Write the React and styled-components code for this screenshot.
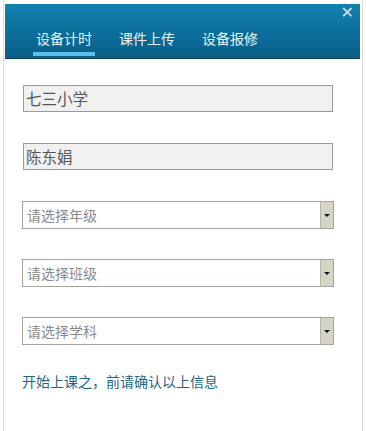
import React from "react";
import styled, { createGlobalStyle } from "styled-components";

const Global = createGlobalStyle`
  html, body { margin: 0; padding: 0; background: #fff; }
  body { font-family: "Noto Sans CJK SC", "Noto Sans", sans-serif; }
`;

const Page = styled.div`
  width: 366px;
  height: 431px;
  padding-left: 3px;
  box-sizing: border-box;
  overflow: hidden;
`;

const Panel = styled.div`
  width: 360px;
  height: 431px;
  box-sizing: border-box;
  border-left: 1px solid #dcdcdc;
  border-right: 1px solid #dcdcdc;
  display: flex;
  flex-direction: column;
`;

const Header = styled.div`
  position: relative;
  margin: 4px 2px 0 1px;
  height: 55px;
  box-sizing: border-box;
  background: linear-gradient(to bottom, #1282b1 0%, #0c6e9b 55%, #0a5d86 100%);
  border-bottom: 1px solid #0a3d58;
  display: flex;
  align-items: flex-end;
  padding-left: 28px;
  gap: 21px;
`;

const Tab = styled.div`
  position: relative;
  color: #e8f4fa;
  font-size: 14px;
  line-height: 20px;
  padding: 0 3px 10px;
  ${(p) =>
    p.$active &&
    `
    &::after {
      content: "";
      position: absolute;
      left: 0;
      right: 0;
      bottom: 2px;
      height: 4px;
      background: #5fc0ea;
    }
  `}
`;

const Close = styled.div`
  position: absolute;
  right: 6px;
  top: 1px;
  color: #cfe9f6;
  font-family: "DejaVu Sans", sans-serif;
  font-weight: bold;
  font-size: 16px;
  line-height: 16px;
`;

const Body = styled.div`
  display: flex;
  flex-direction: column;
  padding: 26px 0 0 18px;
`;

const TextBox = styled.div`
  width: 310px;
  height: 27px;
  margin: 0 0 31px 1px;
  box-sizing: border-box;
  background: #f0f0f0;
  border: 1px solid #9a9a9a;
  color: #555;
  font-size: 15.5px;
  line-height: 25px;
  padding-left: 2px;
`;

const Select = styled.div`
  width: 312px;
  height: 28px;
  margin-bottom: ${(p) => (p.$last ? "26px" : "30px")};
  box-sizing: border-box;
  border: 1px solid #a3a39b;
  background: #fff;
  display: flex;
  align-items: stretch;
`;

const Placeholder = styled.div`
  flex: 1;
  color: #8a8a8a;
  font-size: 14px;
  line-height: 26px;
  padding-left: 4px;
`;

const Arrow = styled.div`
  width: 12px;
  background: #d6d3c7;
  border-left: 1px solid #b8b5a8;
  display: flex;
  align-items: center;
  justify-content: center;
  &::after {
    content: "";
    border-left: 3px solid transparent;
    border-right: 3px solid transparent;
    border-top: 3px solid #111;
  }
`;

const Note = styled.div`
  color: #1d6784;
  font-size: 14px;
  line-height: 20px;
`;

export default function App() {
  return (
    <Page>
      <Global />
      <Panel>
        <Header>
          <Tab $active>设备计时</Tab>
          <Tab>课件上传</Tab>
          <Tab>设备报修</Tab>
          <Close>✕</Close>
        </Header>
        <Body>
          <TextBox>七三小学</TextBox>
          <TextBox>陈东娟</TextBox>
          <Select>
            <Placeholder>请选择年级</Placeholder>
            <Arrow />
          </Select>
          <Select>
            <Placeholder>请选择班级</Placeholder>
            <Arrow />
          </Select>
          <Select $last>
            <Placeholder>请选择学科</Placeholder>
            <Arrow />
          </Select>
          <Note>开始上课之，前请确认以上信息</Note>
        </Body>
      </Panel>
    </Page>
  );
}
